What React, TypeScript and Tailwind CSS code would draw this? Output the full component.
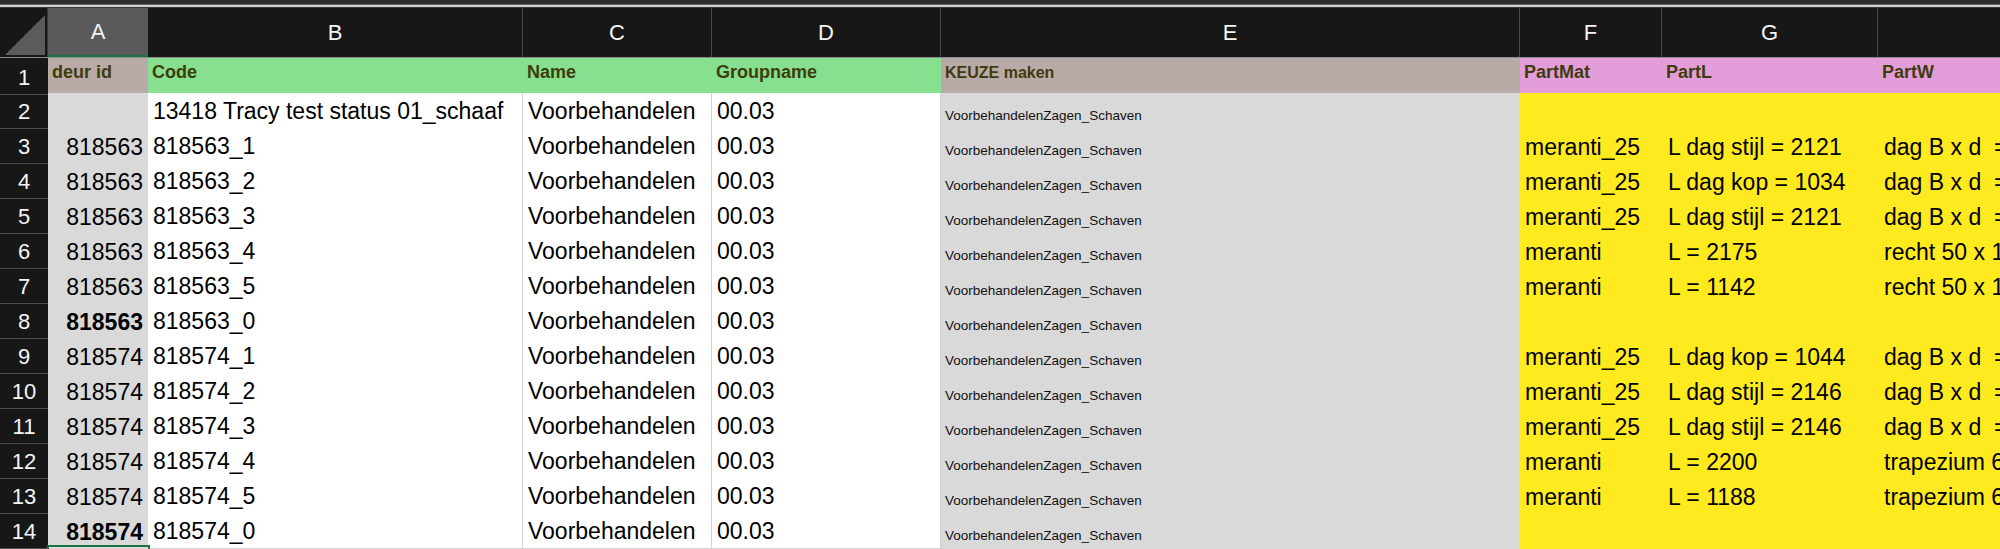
import clsx from "clsx";

type Row = {
  n: number;
  a: string;
  aBold?: boolean;
  b: string;
  f?: string;
  g?: string;
  h?: string;
};

const grid =
  "grid grid-cols-[48px_100px_375px_189px_229px_579px_142px_216px_400px]";

const rows: Row[] = [
  { n: 2, a: "", b: "13418 Tracy test status 01_schaaf" },
  { n: 3, a: "818563", b: "818563_1", f: "meranti_25", g: "L dag stijl = 2121", h: "dag B x d  = 67 x 44" },
  { n: 4, a: "818563", b: "818563_2", f: "meranti_25", g: "L dag kop = 1034", h: "dag B x d  = 67 x 44" },
  { n: 5, a: "818563", b: "818563_3", f: "meranti_25", g: "L dag stijl = 2121", h: "dag B x d  = 67 x 44" },
  { n: 6, a: "818563", b: "818563_4", f: "meranti", g: "L = 2175", h: "recht 50 x 114" },
  { n: 7, a: "818563", b: "818563_5", f: "meranti", g: "L = 1142", h: "recht 50 x 114" },
  { n: 8, a: "818563", aBold: true, b: "818563_0" },
  { n: 9, a: "818574", b: "818574_1", f: "meranti_25", g: "L dag kop = 1044", h: "dag B x d  = 67 x 44" },
  { n: 10, a: "818574", b: "818574_2", f: "meranti_25", g: "L dag stijl = 2146", h: "dag B x d  = 67 x 44" },
  { n: 11, a: "818574", b: "818574_3", f: "meranti_25", g: "L dag stijl = 2146", h: "dag B x d  = 67 x 44" },
  { n: 12, a: "818574", b: "818574_4", f: "meranti", g: "L = 2200", h: "trapezium 67 x 50" },
  { n: 13, a: "818574", b: "818574_5", f: "meranti", g: "L = 1188", h: "trapezium 67 x 50" },
  { n: 14, a: "818574", aBold: true, b: "818574_0" },
];

const colLetters = ["A", "B", "C", "D", "E", "F", "G", ""];

function HeaderRow() {
  return (
    <div className={clsx(grid, "h-[50px] border-b border-[#8c8c8c]")}>
      <div className="border-r border-[#3a3a3a]">
        <svg width="47" height="49" viewBox="0 0 47 49">
          <polygon points="5,47 45,7 45,47" fill="#5b5b5b" />
        </svg>
      </div>
      {colLetters.map((l, i) => (
        <div
          key={i}
          className={clsx(
            "flex items-center justify-center text-[22px] text-[#f4f4f4]",
            i === 0
              ? "border-b-2 border-[#1e7145] bg-[#5a5a5a]"
              : "border-r border-[#4a4a4a]"
          )}
        >
          {l}
        </div>
      ))}
    </div>
  );
}

function FirstRow() {
  const head = "flex items-start overflow-hidden whitespace-pre pl-[4px] pt-[4px] font-bold leading-[21px] text-[#3e3c0b]";
  return (
    <div className={clsx(grid, "h-[35px]")}>
      <div className="flex items-center justify-center border-b border-[#4d4d4d] pt-[3px] text-[22px] text-[#f4f4f4]">
        1
      </div>
      <div className={clsx(head, "bg-[#b8aaa6] text-[18px]")}>deur id</div>
      <div className={clsx(head, "bg-[#86e08f] text-[18px]")}>Code</div>
      <div className={clsx(head, "bg-[#86e08f] text-[18px]")}>Name</div>
      <div className={clsx(head, "bg-[#86e08f] text-[18px]")}>Groupname</div>
      <div className={clsx(head, "bg-[#b8aaa6] text-[16px]")}>KEUZE maken</div>
      <div className={clsx(head, "bg-[#e49ddb] text-[18px]")}>PartMat</div>
      <div className={clsx(head, "bg-[#e49ddb] text-[18px]")}>PartL</div>
      <div className={clsx(head, "bg-[#e49ddb] text-[18px]")}>PartW</div>
    </div>
  );
}

function DataRow({ row }: { row: Row }) {
  const cell = "flex items-end overflow-hidden whitespace-pre pb-[4px] text-[23px] leading-[26px] text-black";
  const white = "border-b border-r border-[#d2d2d2] bg-white pl-[5px]";
  return (
    <div className={clsx(grid, "h-[35px]")}>
      <div className="flex items-center justify-center border-b border-[#4d4d4d] pt-[2px] text-[22px] text-[#f4f4f4]">
        {row.n}
      </div>
      <div
        className={clsx(
          cell,
          "justify-end bg-[#d9d9d9] pr-[5px]",
          row.aBold && "font-bold"
        )}
      >
        {row.a}
      </div>
      <div className={clsx(cell, white)}>{row.b}</div>
      <div className={clsx(cell, white)}>Voorbehandelen</div>
      <div className={clsx(cell, white)}>00.03</div>
      <div className="flex items-end overflow-hidden whitespace-pre bg-[#d9d9d9] pb-[5px] pl-[4px] text-[13.5px] leading-[16px] text-[#111]">
        VoorbehandelenZagen_Schaven
      </div>
      <div className={clsx(cell, "bg-[#ffea1f] pl-[5px]")}>{row.f ?? ""}</div>
      <div className={clsx(cell, "bg-[#ffea1f] pl-[6px]")}>{row.g ?? ""}</div>
      <div className={clsx(cell, "bg-[#ffea1f] pl-[6px]")}>{row.h ?? ""}</div>
    </div>
  );
}

export default function App() {
  return (
    <div className="relative h-[549px] w-[2000px] overflow-hidden bg-[#171717] font-['Liberation_Sans',Arial,sans-serif]">
      <div className="h-[4px] bg-[#2c2c2c]" />
      <div className="h-[1px] bg-[#6a6a6a]" />
      <div className="h-[2px] bg-[#cfcfcf]" />
      <div className="h-[1px] bg-[#3a3a3a]" />
      <HeaderRow />
      <FirstRow />
      {rows.map((r) => (
        <DataRow key={r.n} row={r} />
      ))}
      <div className="absolute left-[47px] top-[545px] h-[10px] w-[103px] border-2 border-[#1e7145]" />
    </div>
  );
}
